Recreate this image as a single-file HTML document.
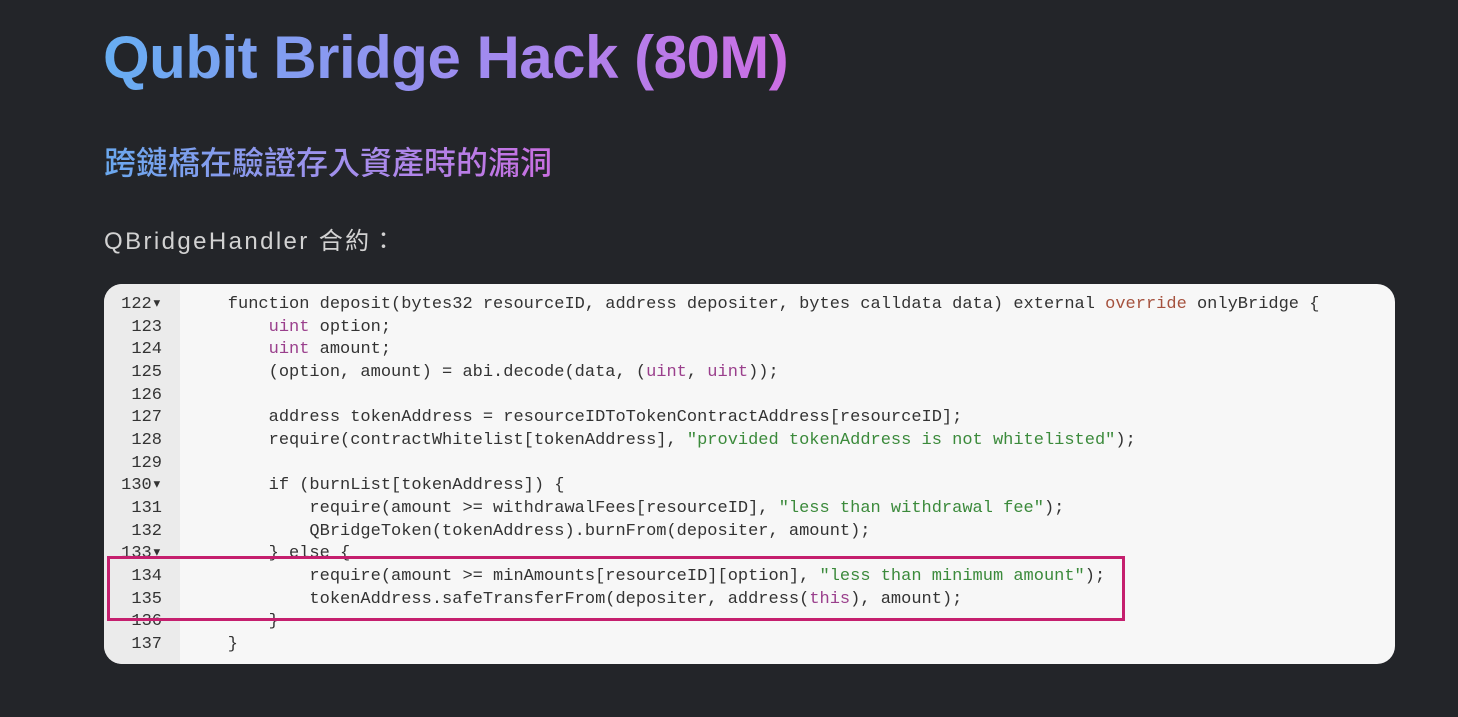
<!DOCTYPE html>
<html><head><meta charset="utf-8"><style>
html,body{margin:0;padding:0;width:1458px;height:717px;overflow:hidden;background:#232529;}
.t{position:absolute;left:103px;top:23px;font:bold 60px "Liberation Sans",sans-serif;letter-spacing:-0.5px;background:linear-gradient(90deg,#67aef2,#9b8ef0 50%,#cc6ee4);-webkit-background-clip:text;background-clip:text;color:transparent;white-space:nowrap;}
.s{position:absolute;left:104px;top:138px;font:500 32px "Liberation Sans","Noto Sans CJK TC",sans-serif;background:linear-gradient(90deg,#6aa8ee,#a98cec 60%,#c86ee0);-webkit-background-clip:text;background-clip:text;color:transparent;white-space:nowrap;}
.h{position:absolute;left:104px;top:221px;font:24px "Liberation Sans","Noto Sans CJK TC",sans-serif;letter-spacing:2.4px;color:#d2d2d2;white-space:nowrap;}
.p{position:absolute;left:104px;top:284px;width:1291px;height:380px;background:#f7f7f7;border-radius:18px;overflow:hidden;}
.g{position:absolute;left:0;top:0;width:76px;height:100%;background:#ebebeb;}
.ln{position:absolute;left:0;top:10px;width:58px;text-align:right;font:17px/22.67px "Liberation Mono",monospace;color:#333;}
.c{position:absolute;left:83px;top:10px;font:17px/22.67px "Liberation Mono",monospace;color:#333;white-space:pre;}
.k{color:#9a3f8c}.str{color:#3b8a3b}.o{color:#a5523e}
.box{position:absolute;left:107px;top:556px;width:1012px;height:59px;border:3px solid #c51f6e;}
</style></head><body>
<div class="t">Qubit Bridge Hack (80M)</div>
<div class="s">跨鏈橋在驗證存入資產時的漏洞</div>
<div class="h">QBridgeHandler 合約：</div>
<div class="p"><div class="g"></div>
<div class="ln">122▾<br>123 <br>124 <br>125 <br>126 <br>127 <br>128 <br>129 <br>130▾<br>131 <br>132 <br>133▾<br>134 <br>135 <br>136 <br>137 </div>
<div class="c">    function deposit(bytes32 resourceID, address depositer, bytes calldata data) external <span class="o">override</span> onlyBridge {
        <span class="k">uint</span> option;
        <span class="k">uint</span> amount;
        (option, amount) = abi.decode(data, (<span class="k">uint</span>, <span class="k">uint</span>));

        address tokenAddress = resourceIDToTokenContractAddress[resourceID];
        require(contractWhitelist[tokenAddress], <span class="str">"provided tokenAddress is not whitelisted"</span>);

        if (burnList[tokenAddress]) {
            require(amount >= withdrawalFees[resourceID], <span class="str">"less than withdrawal fee"</span>);
            QBridgeToken(tokenAddress).burnFrom(depositer, amount);
        } else {
            require(amount >= minAmounts[resourceID][option], <span class="str">"less than minimum amount"</span>);
            tokenAddress.safeTransferFrom(depositer, address(<span class="k">this</span>), amount);
        }
    }</div>
</div>
<div class="box"></div>
</body></html>
